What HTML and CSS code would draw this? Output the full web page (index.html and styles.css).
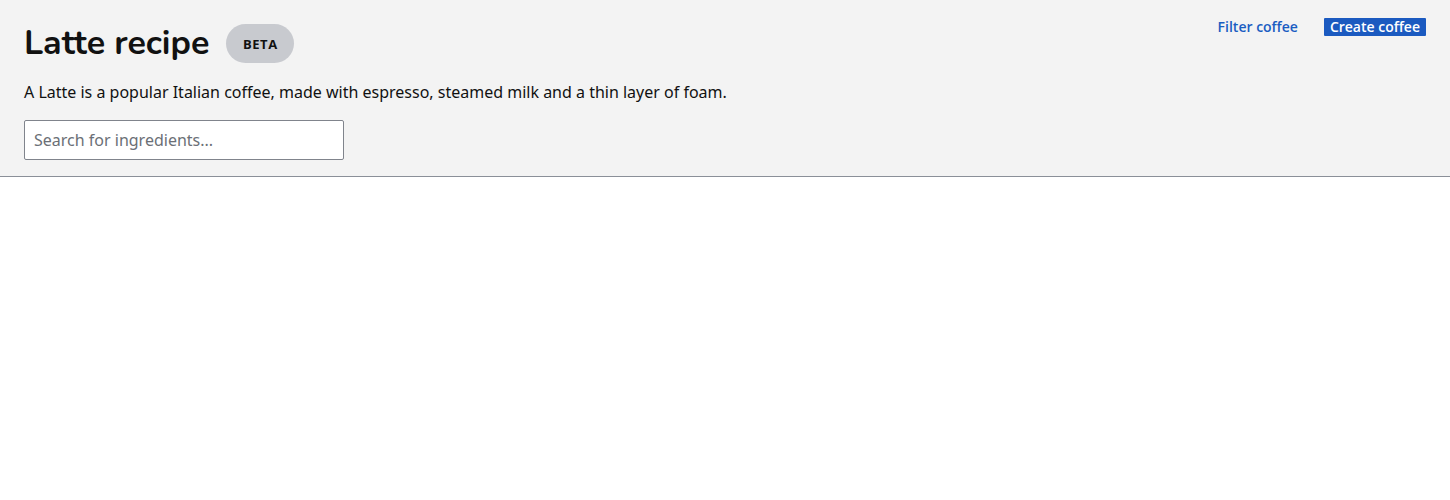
FILE: index.html
```html
<!DOCTYPE html>
<html>
<head>
<meta charset="utf-8">
<link rel="stylesheet" href="styles.css">
</head>
<body>
<header class="page-header">
  <div class="header-main">
    <div class="title-row">
      <h1 class="title">Latte recipe</h1>
      <span class="badge">BETA</span>
    </div>
    <p class="description">A Latte is a popular Italian coffee, made with espresso, steamed milk and a thin layer of foam.</p>
    <input class="search" type="text" placeholder="Search for ingredients...">
  </div>
  <div class="actions">
    <a class="link" href="#">Filter coffee</a>
    <button class="primary">Create coffee</button>
  </div>
</header>
</body>
</html>
```
FILE: styles.css
```css
html, body {
  margin: 0;
  padding: 0;
  background: #ffffff;
  font-family: "Noto Sans", "Open Sans", sans-serif;
  color: #111111;
}
.page-header {
  display: flex;
  justify-content: space-between;
  align-items: flex-start;
  background: #f3f3f3;
  border-bottom: 1px solid #8a8f98;
  padding: 24px 24px 16px 24px;
}
.header-main {
  display: flex;
  flex-direction: column;
}
.title-row {
  display: flex;
  align-items: center;
  gap: 17px;
  height: 39px;
}
.title {
  margin: 0;
  font-family: "Nunito", "Lato", sans-serif;
  font-weight: 700;
  font-size: 34px;
  letter-spacing: 0;
  line-height: 39px;
  color: #111111;
}
.badge {
  display: inline-flex;
  align-items: center;
  justify-content: center;
  width: 68px;
  height: 39px;
  border-radius: 20px;
  background: #c8cacf;
  font-family: "Open Sans", "Noto Sans", sans-serif;
  font-size: 13px;
  font-weight: 700;
  letter-spacing: 0.6px;
  color: #111111;
}
.description {
  margin: 18px 0 0 0;
  font-size: 16px;
  line-height: 22px;
}
.search {
  margin-top: 17px;
  width: 320px;
  height: 40px;
  box-sizing: border-box;
  border: 1px solid #80848c;
  border-radius: 2px;
  background: #ffffff;
  padding: 0 9px;
  font-family: "Noto Sans", "Open Sans", sans-serif;
  font-size: 16px;
  color: #111111;
}
.search::placeholder {
  color: #6b6f76;
}
.actions {
  display: flex;
  align-items: center;
  gap: 26px;
  margin-top: -7px;
}
.link {
  font-family: "Open Sans", "Noto Sans", sans-serif;
  font-size: 14px;
  font-weight: 600;
  color: #1a5dc2;
  text-decoration: none;
}
.primary {
  border: none;
  border-radius: 1px;
  background: #1b5ac0;
  color: #ffffff;
  font-family: "Open Sans", "Noto Sans", sans-serif;
  font-size: 14px;
  font-weight: 600;
  padding: 0 6px;
  height: 18px;
  line-height: 18px;
}
```
